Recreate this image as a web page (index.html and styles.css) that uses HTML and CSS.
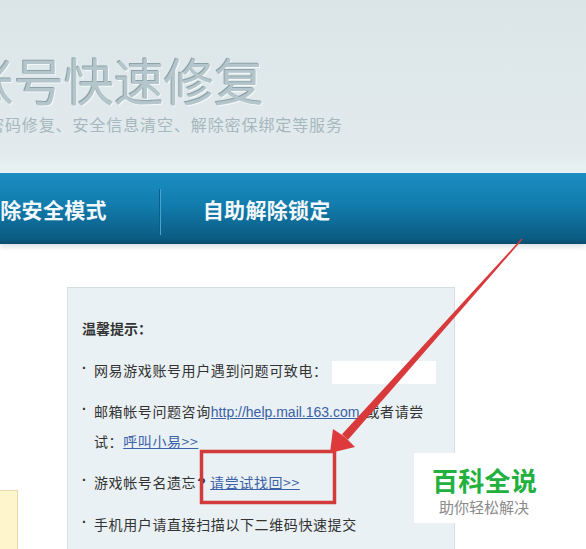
FILE: index.html
```html
<!DOCTYPE html>
<html lang="zh-CN">

<head>
  <meta charset="UTF-8">
  <meta name="viewport" content="width=device-width, initial-scale=1.0">
  <title>帐号快速修复</title>
  <link rel="stylesheet" href="styles.css">
</head>

<body>
  <div class="page">
    <div class="header">
      <h1 class="title">账号快速修复</h1>
      <p class="subtitle">密码修复、安全信息清空、解除密保绑定等服务</p>
    </div>

    <div class="nav">
      <a class="nav-item first" href="#">解除安全模式</a>
      <span class="nav-sep"></span>
      <a class="nav-item" href="#">自助解除锁定</a>
    </div>

    <div class="main">
      <div class="side">
        <div class="side-box"></div>
      </div>
      <div class="tips">
        <h3 class="tips-title">温馨提示：</h3>
        <ul class="tips-list">
          <li><span class="dot">·</span><span>网易游戏账号用户遇到问题可致电：<span class="masked"></span></span></li>
          <li><span class="dot">·</span><span>邮箱帐号问题咨询<a class="url" href="#">http://help.mail.163.com</a>或者请尝<br>试：<a href="#">呼叫小易&gt;&gt;</a></span></li>
          <li><span class="dot">·</span><span>游戏帐号名遗忘<b class="q">?</b> <a href="#">请尝试找回&gt;&gt;</a></span></li>
          <li><span class="dot">·</span><span>手机用户请直接扫描以下二维码快速提交</span></li>
        </ul>
      </div>
    </div>

    <!-- annotation drawn over the screenshot -->
    <svg class="marks" width="586" height="549" viewBox="0 0 586 549">
      <rect x="201.5" y="451.5" width="133" height="51" fill="none" stroke="#d23a3c" stroke-width="3.5"/>
      <polygon points="522.5,239.5 348,439.7 342,434.3 521.5,238.5" fill="#d8393b"/>
      <polygon points="330,453 333,429 345,437 355,447" fill="#de3a3c"/>
    </svg>

    <div class="badge">
      <div class="badge-name">百科全说</div>
      <div class="badge-sub">助你轻松解决</div>
    </div>
  </div>
</body>

</html>
```

FILE: styles.css
```css
* {
  box-sizing: border-box;
}

body {
  margin: 0;
  background-color: #ffffff;
  font-family: "Noto Sans CJK SC", "Noto Sans", sans-serif;
  color: #333333;
}

.page {
  position: relative;
  width: 586px;
  height: 549px;
  overflow: hidden;
}

.header {
  height: 172px;
  padding-top: 48px;
  background: linear-gradient(#dbe5e8, #e2eaed 90%, #e8f2f3);
  overflow: hidden;
  white-space: nowrap;
}

.title {
  margin: 0 0 0 -36px;
  font-size: 50px;
  line-height: 62px;
  font-weight: normal;
  color: #b4c6cb;
  text-shadow: -1px -1px 0 #8ca2a8, 1px 1px 0 #f4f8f9;
}

.subtitle {
  margin: 3px 0 0 -12px;
  font-size: 16px;
  line-height: 22px;
  letter-spacing: 0.9px;
  color: #a6b8bd;
}

.nav {
  display: flex;
  align-items: center;
  height: 72px;
  background: linear-gradient(#1b8ec2, #127cad 45%, #0b5c83 92%, #094d6d);
  border-top: 1px solid #eaf4f6;
  box-shadow: 0 3px 5px rgba(120, 140, 150, 0.25);
  white-space: nowrap;
}

.nav-item {
  color: #f2f8fb;
  text-decoration: none;
  font-size: 21px;
  font-weight: bold;
  letter-spacing: 0.3px;
}

.nav-item.first {
  margin-left: -21px;
  padding-right: 52px;
}

.nav-sep {
  width: 2px;
  height: 46px;
  margin-top: 6px;
  border-left: 1px solid #0a5f88;
  border-right: 1px solid #48a4cc;
  margin-right: 42px;
}

.main {
  display: flex;
  padding-top: 43px;
}

.side {
  width: 67px;
  flex-shrink: 0;
}

.side-box {
  width: 18px;
  height: 80px;
  margin-top: 203px;
  background-color: #fff5cc;
  border: 1px solid #e6d8a8;
  border-left: none;
}

.tips {
  width: 388px;
  height: 300px;
  padding: 26px 14px 0 14px;
  background-color: #e9f1f4;
  border: 1px solid #d3dfe3;
}

.tips-title {
  margin: 0 0 13px 0;
  font-size: 14px;
  line-height: 29px;
  font-weight: bold;
  color: #333333;
}

.tips-list {
  list-style: none;
  margin: 0;
  padding: 0;
}

.tips-list li {
  display: flex;
  font-size: 14px;
  line-height: 29px;
  letter-spacing: 0.6px;
  margin-bottom: 12px;
}

.dot {
  width: 12px;
  flex-shrink: 0;
  font-family: "Liberation Sans", Arial, sans-serif;
  font-weight: bold;
  letter-spacing: 0;
  margin-top: -2px;
}

.tips-list a {
  color: #3b61a6;
  text-decoration: underline;
}

.tips-list a.url {
  font-family: "Liberation Sans", Arial, sans-serif;
  letter-spacing: 0;
  margin-right: 6px;
}

.masked {
  display: inline-block;
  width: 104px;
  height: 23px;
  margin-left: 4px;
  vertical-align: middle;
  background-color: #ffffff;
}

.q {
  font-family: "Liberation Sans", Arial, sans-serif;
  font-weight: bold;
  margin-left: 1px;
}

.marks {
  position: absolute;
  left: 0;
  top: 0;
  pointer-events: none;
}

.badge {
  position: absolute;
  left: 414px;
  top: 453px;
  width: 153px;
  height: 70px;
  padding: 13px 0 0 18px;
  background-color: #ffffff;
}

.badge-name {
  font-size: 26px;
  line-height: 28px;
  font-weight: bold;
  letter-spacing: 0.3px;
  color: #22b03f;
}

.badge-sub {
  margin: 4px 0 0 7px;
  font-size: 15px;
  line-height: 18px;
  color: #8a8a8a;
}
```
